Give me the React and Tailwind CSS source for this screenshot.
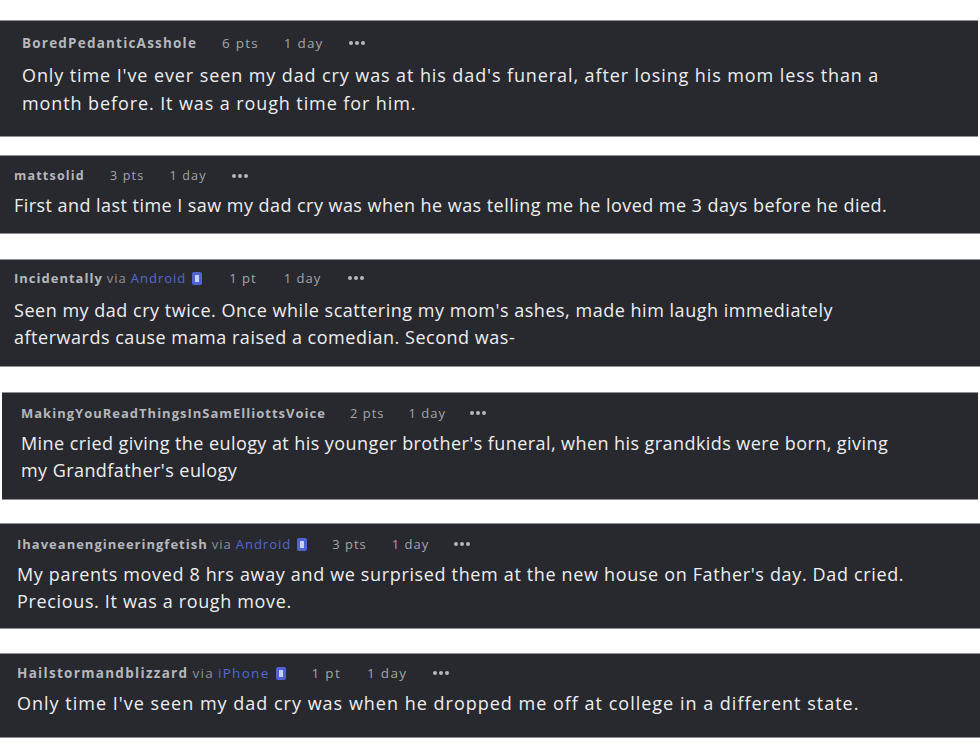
import React from "react";

function Phone() {
  return (
    <svg width="10" height="13" viewBox="0 0 10 13" className="inline-block ml-[6px] shrink-0">
      <rect x="0" y="0" width="10" height="13" rx="2" fill="#4f63d6" />
      <rect x="3" y="3" width="4" height="7" rx="0.5" fill="#c9d0f5" />
    </svg>
  );
}

function Dots() {
  return (
    <span className="inline-flex items-center gap-[2px]">
      <span className="w-[4px] h-[4px] rounded-full bg-[#b5b8bd]" />
      <span className="w-[4px] h-[4px] rounded-full bg-[#b5b8bd]" />
      <span className="w-[4px] h-[4px] rounded-full bg-[#b5b8bd]" />
    </span>
  );
}

function Meta({ user, via, pts, cls, gap }) {
  return (
    <div className={"flex items-center text-[#a2a5ab] " + cls}>
      <span className="font-bold text-[#b4b7bc]">{user}</span>
      {via && (
        <span className="ml-[4px] flex items-center">
          <span className="text-[#8f9298]">via</span>
          <span className="ml-[4px] text-[#5468d4]">{via}</span>
          <Phone />
        </span>
      )}
      <span className={gap}>{pts}</span>
      <span className={gap}>1 day</span>
      <span className={gap + " flex items-center"}>
        <Dots />
      </span>
    </div>
  );
}

export default function App() {
  const font = { fontFamily: '"Open Sans", "Noto Sans", sans-serif' };
  return (
    <div className="w-[980px] h-[754px] bg-white overflow-hidden flex flex-col" style={font}>
      {/* Card 1 */}
      <div className="mt-[20px] h-[117px] w-[978px] bg-[#27292e] border-y border-[#8e9094] px-[22px] pt-[14px]">
        <Meta user="BoredPedanticAsshole" pts="6 pts" cls="text-[13.5px] tracking-[1.2px] leading-[16px]" gap="ml-[25px]" />
        <div className="mt-[10px] text-[18px] tracking-[0.9px] leading-[28px] text-[#eeeef0] whitespace-nowrap">
          <div>Only time I've ever seen my dad cry was at his dad's funeral, after losing his mom less than a</div>
          <div>month before. It was a rough time for him.</div>
        </div>
      </div>

      {/* Card 2 */}
      <div className="mt-[18px] h-[79px] w-[980px] bg-[#27292e] border-y border-[#8e9094] px-[14px] pt-[12px]">
        <Meta user="mattsolid" pts="3 pts" cls="text-[12.5px] tracking-[1.2px] leading-[16px]" gap="ml-[25px]" />
        <div className="mt-[8px] text-[18px] tracking-[0.45px] leading-[26px] text-[#eeeef0] whitespace-nowrap">
          <div>First and last time I saw my dad cry was when he was telling me he loved me 3 days before he died.</div>
        </div>
      </div>

      {/* Card 3 */}
      <div className="mt-[25px] h-[108px] w-[980px] bg-[#27292e] border-y border-[#8e9094] px-[14px] pt-[10px]">
        <Meta user="Incidentally" via="Android" pts="1 pt" cls="text-[13px] tracking-[1px] leading-[16px]" gap="ml-[27px]" />
        <div className="mt-[11px] text-[18px] tracking-[0.52px] leading-[27px] text-[#eeeef0] whitespace-nowrap">
          <div>Seen my dad cry twice. Once while scattering my mom's ashes, made him laugh immediately</div>
          <div>afterwards cause mama raised a comedian. Second was-</div>
        </div>
      </div>

      {/* Card 4 */}
      <div className="mt-[25px] ml-[2px] h-[108px] w-[976px] bg-[#27292e] border-y border-[#8e9094] px-[19px] pt-[12px]">
        <Meta user="MakingYouReadThingsInSamElliottsVoice" pts="2 pts" cls="text-[13px] tracking-[1px] leading-[16px]" gap="ml-[24px]" />
        <div className="mt-[9px] text-[18px] tracking-[0.43px] leading-[27px] text-[#eeeef0] whitespace-nowrap">
          <div>Mine cried giving the eulogy at his younger brother's funeral, when his grandkids were born, giving</div>
          <div>my Grandfather's eulogy</div>
        </div>
      </div>

      {/* Card 5 */}
      <div className="mt-[23px] h-[106px] w-[980px] bg-[#27292e] border-y border-[#8e9094] px-[17px] pt-[12px]">
        <Meta user="Ihaveanengineeringfetish" via="Android" pts="3 pts" cls="text-[13px] tracking-[1px] leading-[16px]" gap="ml-[25px]" />
        <div className="mt-[9px] text-[18px] tracking-[0.65px] leading-[27px] text-[#eeeef0] whitespace-nowrap">
          <div>My parents moved 8 hrs away and we surprised them at the new house on Father's day. Dad cried.</div>
          <div>Precious. It was a rough move.</div>
        </div>
      </div>

      {/* Card 6 */}
      <div className="mt-[24px] h-[85px] w-[980px] bg-[#27292e] border-y border-[#8e9094] px-[17px] pt-[11px]">
        <Meta user="Hailstormandblizzard" via="iPhone" pts="1 pt" cls="text-[13.5px] tracking-[1.3px] leading-[16px]" gap="ml-[26px]" />
        <div className="mt-[9px] text-[18px] tracking-[1px] leading-[27px] text-[#eeeef0] whitespace-nowrap">
          <div>Only time I've seen my dad cry was when he dropped me off at college in a different state.</div>
        </div>
      </div>
    </div>
  );
}
